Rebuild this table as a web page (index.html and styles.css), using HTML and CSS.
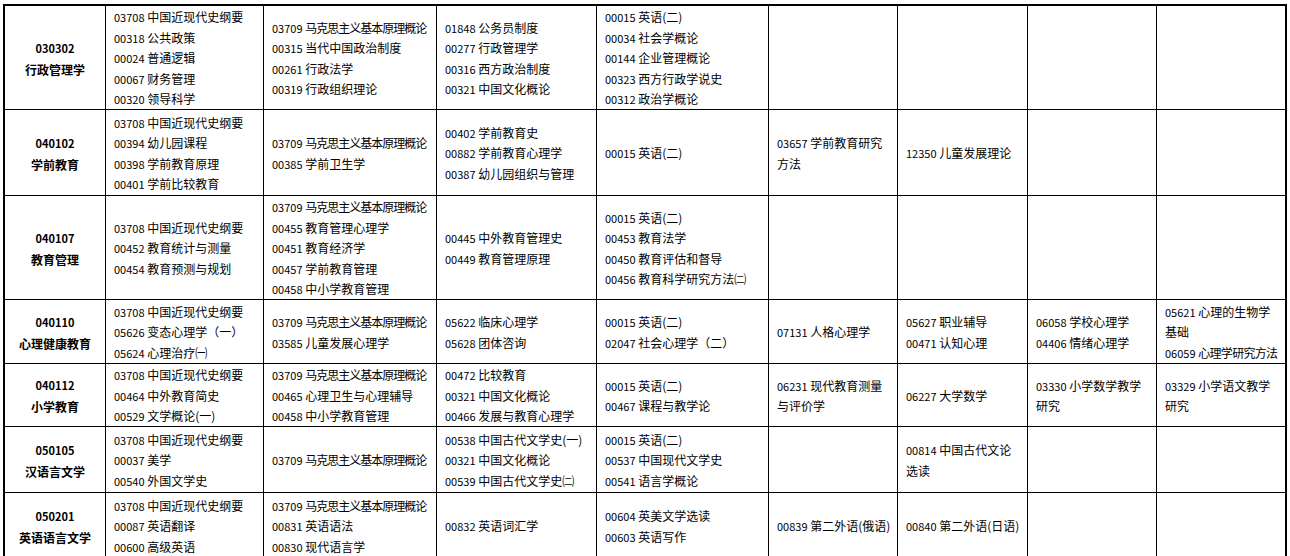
FILE: index.html
```html
<!DOCTYPE html>
<html lang="zh-CN">
<head>
<meta charset="utf-8">
<title>专业课程表</title>
<link rel="stylesheet" href="styles.css">
</head>
<body>
<div class="sheet">
  <div class="grid">
    <!-- row 1 -->
    <div class="c hd"><div class="code">030302</div><div>行政管理学</div></div>
    <div class="c"><div><span class="n">03708</span> 中国近现代史纲要</div><div><span class="n">00318</span> 公共政策</div><div><span class="n">00024</span> 普通逻辑</div><div><span class="n">00067</span> 财务管理</div><div><span class="n">00320</span> 领导科学</div></div>
    <div class="c"><div><span class="n">03709</span> <span class="sq">马克思主义基本原理概论</span></div><div><span class="n">00315</span> 当代中国政治制度</div><div><span class="n">00261</span> 行政法学</div><div><span class="n">00319</span> 行政组织理论</div></div>
    <div class="c"><div><span class="n">01848</span> 公务员制度</div><div><span class="n">00277</span> 行政管理学</div><div><span class="n">00316</span> 西方政治制度</div><div><span class="n">00321</span> 中国文化概论</div></div>
    <div class="c"><div><span class="n">00015</span> 英语(二)</div><div><span class="n">00034</span> 社会学概论</div><div><span class="n">00144</span> 企业管理概论</div><div><span class="n">00323</span> 西方行政学说史</div><div><span class="n">00312</span> 政治学概论</div></div>
    <div class="c"></div>
    <div class="c"></div>
    <div class="c"></div>
    <div class="c last"></div>

    <!-- row 2 -->
    <div class="c hd"><div class="code">040102</div><div>学前教育</div></div>
    <div class="c"><div><span class="n">03708</span> 中国近现代史纲要</div><div><span class="n">00394</span> 幼儿园课程</div><div><span class="n">00398</span> 学前教育原理</div><div><span class="n">00401</span> 学前比较教育</div></div>
    <div class="c"><div><span class="n">03709</span> <span class="sq">马克思主义基本原理概论</span></div><div><span class="n">00385</span> 学前卫生学</div></div>
    <div class="c"><div><span class="n">00402</span> 学前教育史</div><div><span class="n">00882</span> 学前教育心理学</div><div><span class="n">00387</span> 幼儿园组织与管理</div></div>
    <div class="c"><div><span class="n">00015</span> 英语(二)</div></div>
    <div class="c"><div><span class="n">03657</span> 学前教育研究</div><div>方法</div></div>
    <div class="c"><div><span class="n">12350</span> 儿童发展理论</div></div>
    <div class="c"></div>
    <div class="c last"></div>

    <!-- row 3 -->
    <div class="c hd"><div class="code">040107</div><div>教育管理</div></div>
    <div class="c"><div><span class="n">03708</span> 中国近现代史纲要</div><div><span class="n">00452</span> 教育统计与测量</div><div><span class="n">00454</span> 教育预测与规划</div></div>
    <div class="c"><div><span class="n">03709</span> <span class="sq">马克思主义基本原理概论</span></div><div><span class="n">00455</span> 教育管理心理学</div><div><span class="n">00451</span> 教育经济学</div><div><span class="n">00457</span> 学前教育管理</div><div><span class="n">00458</span> 中小学教育管理</div></div>
    <div class="c"><div><span class="n">00445</span> 中外教育管理史</div><div><span class="n">00449</span> 教育管理原理</div></div>
    <div class="c"><div><span class="n">00015</span> 英语(二)</div><div><span class="n">00453</span> 教育法学</div><div><span class="n">00450</span> 教育评估和督导</div><div><span class="n">00456</span> 教育科学研究方法㈡</div></div>
    <div class="c"></div>
    <div class="c"></div>
    <div class="c"></div>
    <div class="c last"></div>

    <!-- row 4 -->
    <div class="c hd"><div class="code">040110</div><div>心理健康教育</div></div>
    <div class="c"><div><span class="n">03708</span> 中国近现代史纲要</div><div><span class="n">05626</span> 变态心理学（一）</div><div><span class="n">05624</span> 心理治疗㈠</div></div>
    <div class="c"><div><span class="n">03709</span> <span class="sq">马克思主义基本原理概论</span></div><div><span class="n">03585</span> 儿童发展心理学</div></div>
    <div class="c"><div><span class="n">05622</span> 临床心理学</div><div><span class="n">05628</span> 团体咨询</div></div>
    <div class="c"><div><span class="n">00015</span> 英语(二)</div><div><span class="n">02047</span> 社会心理学（二）</div></div>
    <div class="c"><div><span class="n">07131</span> 人格心理学</div></div>
    <div class="c"><div><span class="n">05627</span> 职业辅导</div><div><span class="n">00471</span> 认知心理</div></div>
    <div class="c"><div><span class="n">06058</span> 学校心理学</div><div><span class="n">04406</span> 情绪心理学</div></div>
    <div class="c last"><div><span class="n">05621</span> 心理的生物学</div><div>基础</div><div><span class="n">06059</span> <span class="sq2">心理学研究方法</span></div></div>

    <!-- row 5 -->
    <div class="c hd"><div class="code">040112</div><div>小学教育</div></div>
    <div class="c"><div><span class="n">03708</span> 中国近现代史纲要</div><div><span class="n">00464</span> 中外教育简史</div><div><span class="n">00529</span> 文学概论(一)</div></div>
    <div class="c"><div><span class="n">03709</span> <span class="sq">马克思主义基本原理概论</span></div><div><span class="n">00465</span> 心理卫生与心理辅导</div><div><span class="n">00458</span> 中小学教育管理</div></div>
    <div class="c"><div><span class="n">00472</span> 比较教育</div><div><span class="n">00321</span> 中国文化概论</div><div><span class="n">00466</span> 发展与教育心理学</div></div>
    <div class="c"><div><span class="n">00015</span> 英语(二)</div><div><span class="n">00467</span> 课程与教学论</div></div>
    <div class="c"><div><span class="n">06231</span> 现代教育测量</div><div>与评价学</div></div>
    <div class="c"><div><span class="n">06227</span> 大学数学</div></div>
    <div class="c"><div><span class="n">03330</span> 小学数学教学</div><div>研究</div></div>
    <div class="c last"><div><span class="n">03329</span> 小学语文教学</div><div>研究</div></div>

    <!-- row 6 -->
    <div class="c hd"><div class="code">050105</div><div>汉语言文学</div></div>
    <div class="c"><div><span class="n">03708</span> 中国近现代史纲要</div><div><span class="n">00037</span> 美学</div><div><span class="n">00540</span> 外国文学史</div></div>
    <div class="c"><div><span class="n">03709</span> <span class="sq">马克思主义基本原理概论</span></div></div>
    <div class="c"><div><span class="n">00538</span> 中国古代文学史(一)</div><div><span class="n">00321</span> 中国文化概论</div><div><span class="n">00539</span> 中国古代文学史㈡</div></div>
    <div class="c"><div><span class="n">00015</span> 英语(二)</div><div><span class="n">00537</span> 中国现代文学史</div><div><span class="n">00541</span> 语言学概论</div></div>
    <div class="c"></div>
    <div class="c"><div><span class="n">00814</span> 中国古代文论</div><div>选读</div></div>
    <div class="c"></div>
    <div class="c last"></div>

    <!-- row 7 -->
    <div class="c hd"><div class="code">050201</div><div>英语语言文学</div></div>
    <div class="c"><div><span class="n">03708</span> 中国近现代史纲要</div><div><span class="n">00087</span> 英语翻译</div><div><span class="n">00600</span> 高级英语</div></div>
    <div class="c"><div><span class="n">03709</span> <span class="sq">马克思主义基本原理概论</span></div><div><span class="n">00831</span> 英语语法</div><div><span class="n">00830</span> 现代语言学</div></div>
    <div class="c"><div><span class="n">00832</span> 英语词汇学</div></div>
    <div class="c"><div><span class="n">00604</span> 英美文学选读</div><div><span class="n">00603</span> 英语写作</div></div>
    <div class="c"><div><span class="n">00839</span> 第二外语(俄语)</div></div>
    <div class="c"><div><span class="n">00840</span> 第二外语(日语)</div></div>
    <div class="c"></div>
    <div class="c last"></div>
  </div>
</div>
</body>
</html>
```

FILE: styles.css
```css
html, body {
  margin: 0;
  padding: 0;
  background: #ffffff;
}

body {
  font-family: "Noto Sans CJK SC", "Noto Sans CJK TC", sans-serif;
  font-size: 12px;
  color: #000000;
  overflow: hidden;
}

.sheet {
  padding: 4px 0 0 3px;
}

.grid {
  display: grid;
  width: max-content;
  grid-template-columns: 101px 158px 173px 160px 172px 129px 130px 129px 128px;
  grid-template-rows: 104px 86px 104px 64px 63px 66px 66px;
  border-top: 2px solid #000;
  border-left: 2px solid #000;
  border-right: 2px solid #000;
}

.c {
  box-sizing: border-box;
  display: flex;
  flex-direction: column;
  justify-content: center;
  padding: 2px 0 0 8px;
  border-right: 1px solid #000;
  border-bottom: 1px solid #000;
  line-height: 20.5px;
  white-space: nowrap;
  min-height: 0;
}

.c.last {
  border-right: 0;
}

.n {
  font-size: 11px;
}

.sq {
  letter-spacing: -1px;
}

.sq2 {
  letter-spacing: -0.7px;
}

.c.hd {
  align-items: center;
  padding-left: 0;
  font-weight: bold;
  line-height: 21px;
}

.code {
  font-size: 11px;
}
```
